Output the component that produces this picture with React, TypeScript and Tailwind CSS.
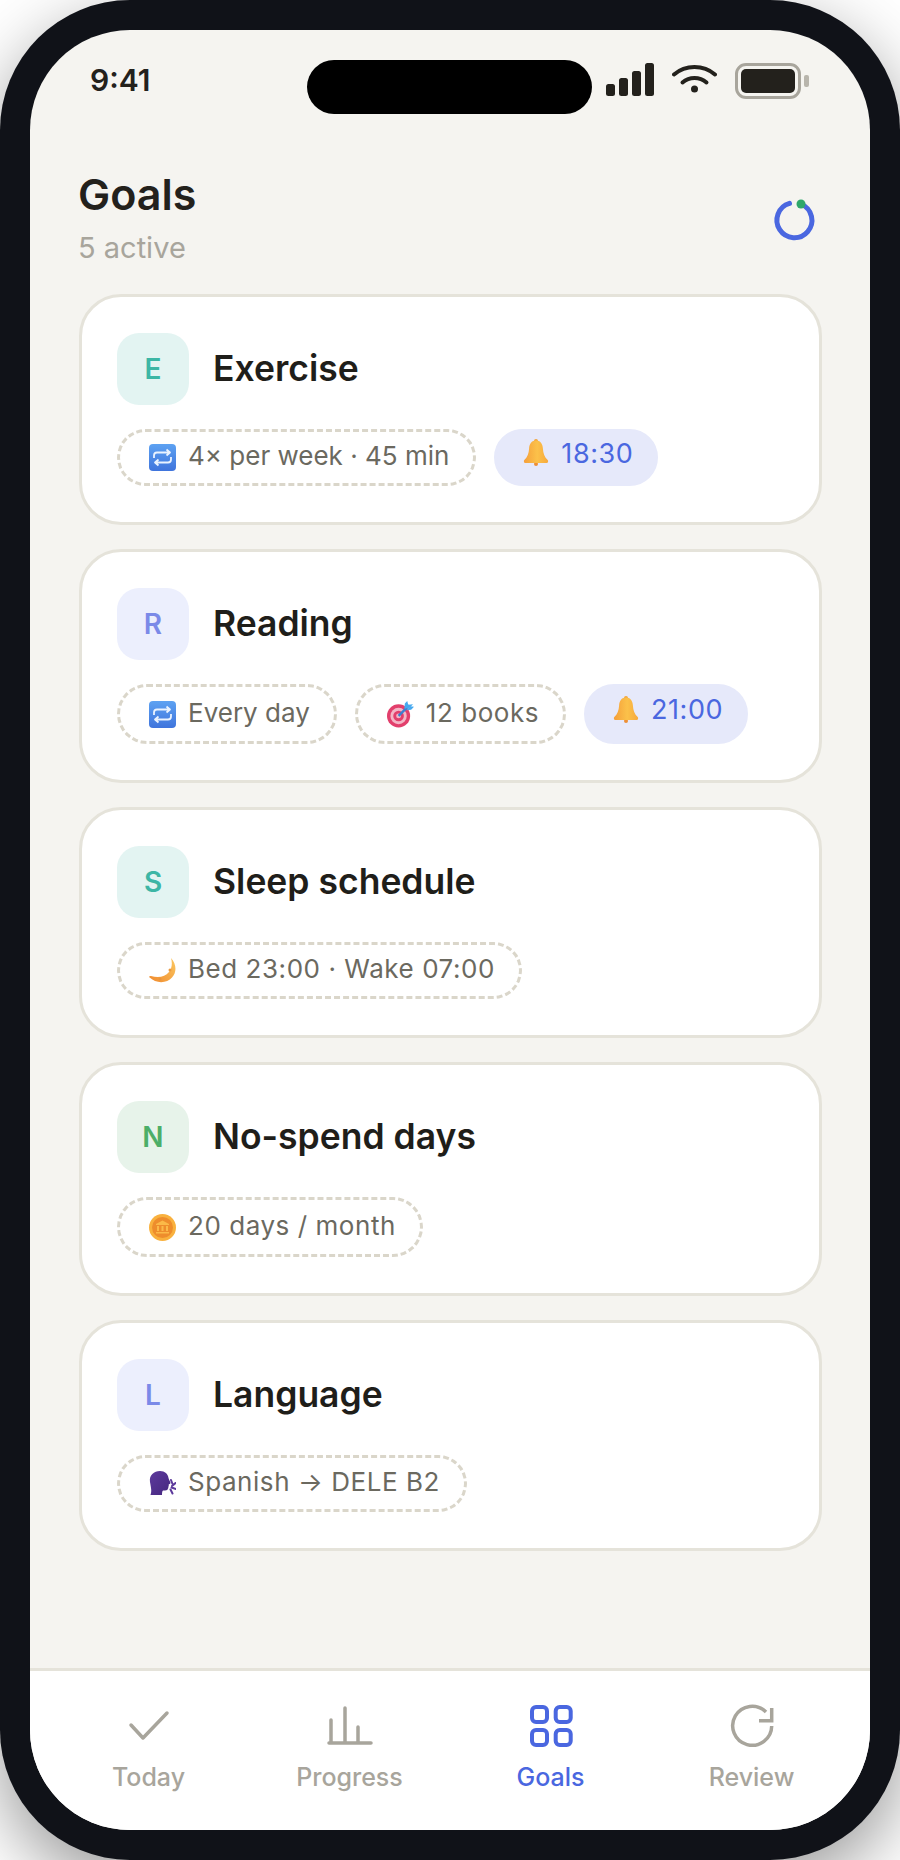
import type { ReactNode } from 'react';

type Tint = 'teal' | 'indigo' | 'green';

interface Chip {
  readonly icon: ReactNode;
  readonly label: string;
  readonly alarm?: boolean;
  readonly wide?: boolean;
}

interface Goal {
  readonly letter: string;
  readonly name: string;
  readonly tint: Tint;
  readonly tall?: boolean;
  readonly chips: readonly Chip[];
}

const tints: Record<Tint, string> = {
  teal: 'bg-[#e3f4f2] text-[#3db6a5]',
  indigo: 'bg-[#eceffd] text-[#7b8ae8]',
  green: 'bg-[#e7f3ea] text-[#4cae68]'
};

function RepeatEmoji() {
  return (
    <svg width="27" height="27" viewBox="0 0 27 27" fill="none">
      <defs>
        <linearGradient id="repeat-bg" x1="0" y1="0" x2="0" y2="1">
          <stop offset="0" stopColor="#5da2f2" />
          <stop offset="1" stopColor="#3f74dc" />
        </linearGradient>
      </defs>
      <rect width="27" height="27" rx="4" fill="url(#repeat-bg)" />
      <path
        d="M5 14v-2.500C5 9.500 6.300 8.500 8 8.500h12M17.500 5.500l3.500 3-3.500 3M22 13v2.500c0 2-1.300 3-3 3H7M9.500 15.500l-3.500 3 3.500 3"
        stroke="#eaf3ff"
        strokeWidth="1.800"
        strokeLinejoin="round"
      />
    </svg>
  );
}

function BellEmoji() {
  return (
    <svg className="-mt-[10px]" width="26" height="27" viewBox="0 0 26 27">
      <defs>
        <linearGradient id="bell-bg" x1="0" y1="0" x2="1" y2="0">
          <stop offset="0" stopColor="#f59f3a" />
          <stop offset="0.55" stopColor="#fbc14a" />
          <stop offset="1" stopColor="#f7a93c" />
        </linearGradient>
      </defs>
      <circle cx="13" cy="25" r="2" fill="#ee8f35" />
      <circle cx="13" cy="2" r="2" fill="#f3a53c" />
      <path
        d="M13 1.500c4.400 0 6.600 3.400 6.900 8 .3 5 1.600 8.500 4.800 11.500.8.800.5 3-1 3H2.300c-1.500 0-1.800-2.200-1-3C4.500 18 5.800 14.500 6.100 9.500c.3-4.600 2.500-8 6.900-8z"
        fill="url(#bell-bg)"
      />
    </svg>
  );
}

function TargetEmoji() {
  return (
    <svg width="28" height="28" viewBox="0 0 28 28" fill="none">
      <circle cx="12" cy="16" r="12" fill="#e23f6c" />
      <circle cx="12" cy="16" r="8.500" fill="#f3b6c6" />
      <circle cx="12" cy="16" r="5.500" fill="#e23f6c" />
      <circle cx="12" cy="16" r="2.500" fill="#f3b6c6" />
      <path d="M12 16 23 5" stroke="#3b7fd0" strokeWidth="2.500" />
      <path d="M18 8l.5-5L21 .5l1 4 5-.5-3 3-5.500 1.500z" fill="#46a9ef" />
      <path d="M20 10l5-.5 3-3-4-.5z" fill="#46a9ef" />
    </svg>
  );
}

function MoonEmoji() {
  return (
    <svg width="27" height="25" viewBox="0 0 27 25">
      <defs>
        <linearGradient id="moon-bg" x1="0" y1="1" x2="1" y2="0">
          <stop offset="0" stopColor="#f08a2e" />
          <stop offset="1" stopColor="#fbc860" />
        </linearGradient>
      </defs>
      <path
        d="M22 0c5.500 6 6 14 1 19.500-5 5.500-15 7-23-.5.3-.8 1-1.200 2-1 8 2.500 14 .5 18-4 3-3.800 3.500-9 2-14z"
        fill="url(#moon-bg)"
      />
      <circle cx="11" cy="21" r="1.500" fill="#e9953c" />
      <circle cx="21" cy="12" r="1.500" fill="#ea9a40" />
    </svg>
  );
}

function CoinEmoji() {
  return (
    <svg width="27" height="27" viewBox="0 0 27 27">
      <circle cx="13.500" cy="13.500" r="13.500" fill="#f9b13e" />
      <circle cx="13.500" cy="13.500" r="10.500" fill="#ee8d2c" />
      <path
        d="M13.500 6.500 20 10v1H7v-1zM8 12h2v5H8zM12.500 12h2v5h-2zM17 12h2v5h-2zM7 18h13v1.500H7z"
        fill="#fbb948"
      />
    </svg>
  );
}

function SpeakingEmoji() {
  return (
    <svg width="27" height="26" viewBox="0 0 27 26">
      <defs>
        <linearGradient id="head-bg" x1="0" y1="0" x2="1" y2="1">
          <stop offset="0" stopColor="#5d3a9c" />
          <stop offset="1" stopColor="#45277f" />
        </linearGradient>
      </defs>
      <path
        d="M1 11C0 4 5 0 11 0c5 0 8 3 8.500 7 .2 1.500 2 4 2 5s-1.500 1-1.800 1.500c0 1 .3 1.500-.2 2s.3 1.500-.5 2c-.5 2-2 2-5 2-1 .5-1 3-1 4.500H1.500C3 20 2 17 1 11z"
        fill="url(#head-bg)"
      />
      <path
        d="M22 9l1.500 4M26.500 12l-3.500 3M27 18l-4.500-1.500M23.500 22.500 21.500 18.500"
        stroke="#5d3a9c"
        strokeWidth="2"
        strokeLinecap="round"
      />
    </svg>
  );
}

const goals: readonly Goal[] = [
  {
    letter: 'E',
    name: 'Exercise',
    tint: 'teal',
    chips: [
      { icon: <RepeatEmoji />, label: '4× per week · 45 min' },
      { icon: <BellEmoji />, label: '18:30', alarm: true, wide: true }
    ]
  },
  {
    letter: 'R',
    name: 'Reading',
    tint: 'indigo',
    tall: true,
    chips: [
      { icon: <RepeatEmoji />, label: 'Every day' },
      { icon: <TargetEmoji />, label: '12 books', wide: true },
      { icon: <BellEmoji />, label: '21:00', alarm: true, wide: true }
    ]
  },
  {
    letter: 'S',
    name: 'Sleep schedule',
    tint: 'teal',
    chips: [{ icon: <MoonEmoji />, label: 'Bed 23:00 · Wake 07:00', wide: true }]
  },
  {
    letter: 'N',
    name: 'No-spend days',
    tint: 'green',
    tall: true,
    chips: [{ icon: <CoinEmoji />, label: '20 days / month', wide: true }]
  },
  {
    letter: 'L',
    name: 'Language',
    tint: 'indigo',
    chips: [{ icon: <SpeakingEmoji />, label: 'Spanish → DELE B2', wide: true }]
  }
];

function StatusIcons() {
  return (
    <div className="flex items-start">
      <svg width="48" height="33" viewBox="0 0 48 33" fill="#23211c">
        <rect x="0" y="21" width="9" height="12" rx="2.500" />
        <rect x="13" y="15" width="9" height="18" rx="2.500" />
        <rect x="26" y="8" width="9" height="25" rx="2.500" />
        <rect x="39" y="0" width="9" height="33" rx="2.500" />
      </svg>
      <svg className="ml-[18px]" width="45" height="30" viewBox="0 0 45 30" fill="none">
        <path d="M2 11.500C13.500 1.500 31.500 1.500 43 11.500" stroke="#23211c" strokeWidth="4" strokeLinecap="round" />
        <path d="M10.500 19.500C17.500 13.500 27.500 13.500 34.500 19.500" stroke="#23211c" strokeWidth="4" strokeLinecap="round" />
        <circle cx="22.500" cy="26" r="3.500" fill="#23211c" />
      </svg>
      <div className="ml-[18px] flex h-[36px] w-[66px] rounded-[11px] border-[3px] border-[#a8a59c] p-[3px]">
        <div className="h-full w-full rounded-[5px] bg-[#23211c]" />
      </div>
      <div className="ml-[3px] mt-[12px] h-[12px] w-[5px] rounded-[2px] bg-[#b8b5ac]" />
    </div>
  );
}

function Ring() {
  return (
    <svg className="mt-[5px]" width="48" height="48" viewBox="0 0 48 48" fill="none">
      <path
        d="M30.500 8.200A17.500 17.500 0 1 1 18.500 7.400"
        stroke="#4a67e0"
        strokeWidth="5"
        strokeLinecap="round"
      />
      <circle cx="30" cy="8" r="4.500" fill="#2fa86b" />
    </svg>
  );
}

function GoalCard({ goal }: { readonly goal: Goal }) {
  return (
    <div className="rounded-[42px] border-[3px] border-[#e5e3da] bg-white px-[35px] pb-[36px] pt-[36px]">
      <div className="flex items-center gap-[24px]">
        <div
          className={`flex h-[72px] w-[72px] items-center justify-center rounded-[22px] text-[28px] font-semibold ${tints[goal.tint]}`}
        >
          {goal.letter}
        </div>
        <h2 className="-mt-[1px] text-[35.5px] font-semibold leading-[40px] text-[#1f1e1a]">{goal.name}</h2>
      </div>
      <div className="mt-[24px] flex gap-[18px]">
        {goal.chips.map((chip) => (
          <div
            key={chip.label}
            className={`flex items-center gap-[12px] rounded-full leading-[32px] ${goal.tall ? 'h-[60px]' : 'h-[57px]'} ${
              chip.wide ? 'tracking-[0.55px]' : ''
            } ${
              chip.alarm
                ? 'border-[3px] border-[#e6e9fa] bg-[#e6e9fa] pl-[25px] pr-[22px] text-[27px] text-[#4a67e0]'
                : 'border-[3px] border-dashed border-[#dad6ca] pl-[29px] pr-[24px] text-[26px] text-[#6b695f]'
            }`}
          >
            <span className="flex w-[27px] justify-center">{chip.icon}</span>
            <span className={chip.alarm ? '-mt-[8px]' : '-mt-[3px]'}>{chip.label}</span>
          </div>
        ))}
      </div>
    </div>
  );
}

function TabBar() {
  const tabs: readonly { label: string; active?: boolean; icon: ReactNode }[] = [
    {
      label: 'Today',
      icon: (
        <svg width="48" height="48" viewBox="0 0 48 48" fill="none">
          <path d="M6 23l12 13L42 11" stroke="#a8a59c" strokeWidth="3.500" strokeLinecap="round" strokeLinejoin="round" />
        </svg>
      )
    },
    {
      label: 'Progress',
      icon: (
        <svg width="48" height="48" viewBox="0 0 48 48" fill="none">
          <path d="M3 41h42M5 41V18M19 41V6M32 41V25" stroke="#a8a59c" strokeWidth="3.500" strokeLinecap="round" />
        </svg>
      )
    },
    {
      label: 'Goals',
      active: true,
      icon: (
        <svg width="48" height="48" viewBox="0 0 48 48" fill="none" stroke="#4a67e0" strokeWidth="4">
          <rect x="5" y="5" width="15" height="15" rx="4" />
          <rect x="28.700" y="5" width="15" height="15" rx="4" />
          <rect x="5" y="28" width="15" height="15" rx="4" />
          <rect x="28.700" y="28" width="15" height="15" rx="4" />
        </svg>
      )
    },
    {
      label: 'Review',
      icon: (
        <svg width="48" height="48" viewBox="0 0 48 48" fill="none" stroke="#a8a59c" strokeWidth="3.500">
          <path d="M43.700 24A19.500 19.500 0 1 1 38 10" />
          <path d="M43.700 6v12.700H31" />
        </svg>
      )
    }
  ];

  return (
    <nav className="mt-auto grid h-[162px] grid-cols-4 border-t-[3px] border-[#e5e3da] bg-white px-[18px] pt-[31px]">
      {tabs.map((tab) => (
        <div
          key={tab.label}
          className={`flex flex-col items-center text-[25px] font-medium leading-[30px] ${tab.active ? 'text-[#4a67e0]' : 'text-[#a8a59c]'}`}
        >
          {tab.icon}
          <span className="mt-[12px]">{tab.label}</span>
        </div>
      ))}
    </nav>
  );
}

export default function App() {
  return (
    <div className="h-[1860px] w-[900px] overflow-hidden bg-white font-['Inter',sans-serif]">
      <div className="h-full w-full rounded-[130px] bg-[#101218] p-[30px] shadow-[0_24px_70px_rgba(0,0,0,0.4)]">
        <div className="relative flex h-full flex-col overflow-hidden rounded-[100px] bg-[#f5f4f0]">
          <div className="absolute left-[277px] top-[30px] h-[54px] w-[285px] rounded-full bg-black" />
          <div className="flex h-[110px] items-start justify-between pl-[60px] pr-[61px] pt-[33px]">
            <span className="-mt-[3px] text-[30px] font-semibold leading-[40px] text-[#23211c]">9:41</span>
            <StatusIcons />
          </div>
          <header className="flex items-center justify-between pb-[29px] pl-[48px] pr-[51px] pt-[30px]">
            <div>
              <h1 className="text-[43px] font-semibold leading-[48px] text-[#23211c]">Goals</h1>
              <p className="mt-[12px] text-[29px] leading-[35px] text-[#a8a59c]">5 active</p>
            </div>
            <Ring />
          </header>
          <div className="flex flex-col gap-[24px] pl-[49px] pr-[48px]">
            {goals.map((goal) => (
              <GoalCard key={goal.name} goal={goal} />
            ))}
          </div>
          <TabBar />
        </div>
      </div>
    </div>
  );
}
